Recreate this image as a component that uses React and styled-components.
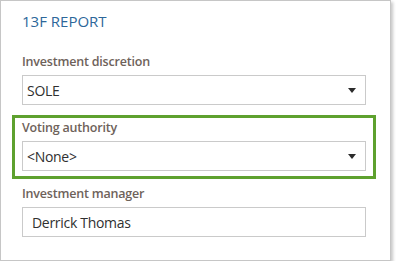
import React from 'react';
import styled, { createGlobalStyle } from 'styled-components';

const GlobalStyle = createGlobalStyle`
  body {
    margin: 0;
    background: #ffffff;
    font-family: 'Open Sans', 'Liberation Sans', sans-serif;
  }
`;

const Panel = styled.div`
  box-sizing: border-box;
  width: 391px;
  height: 261px;
  border: 1px solid #c6c6c6;
  background: #ffffff;
  box-shadow: 2px 2px 3px rgba(0, 0, 0, 0.22);
  padding: 10px 14px 15px 11px;
`;

const Title = styled.div`
  margin: 0 0 18px 10px;
  font-size: 15px;
  line-height: 20px;
  color: #2d679a;
`;

const FieldList = styled.div`
  display: flex;
  flex-direction: column;
  gap: 2px;
`;

const Field = styled.div`
  border: 3px solid ${(props) => (props.highlight ? '#5ea12e' : 'transparent')};
  padding: 1px 7px 5px;
`;

const Label = styled.div`
  font-size: 12.5px;
  font-weight: 600;
  letter-spacing: -0.2px;
  line-height: 18px;
  color: #6e625a;
  margin-bottom: 4px;
`;

const Box = styled.div`
  box-sizing: border-box;
  height: 30px;
  border: 1px solid #cacaca;
  display: flex;
  align-items: center;
  justify-content: space-between;
  padding: 0 9px 0 ${(props) => (props.select ? '4px' : '9px')};
  font-size: 14px;
  letter-spacing: -0.3px;
  color: #303030;
`;

const Arrow = styled.span`
  width: 0;
  height: 0;
  border-left: 4px solid transparent;
  border-right: 4px solid transparent;
  border-top: 5px solid #2b2b2b;
  margin-top: 1px;
`;

const fields = [
  { label: 'Investment discretion', value: 'SOLE', select: true },
  { label: 'Voting authority', value: '<None>', select: true, highlight: true },
  { label: 'Investment manager', value: 'Derrick Thomas' },
];

const App = () => (
  <>
    <GlobalStyle />
    <Panel>
      <Title>13F REPORT</Title>
      <FieldList>
        {fields.map((field) => (
          <Field key={field.label} highlight={field.highlight}>
            <Label>{field.label}</Label>
            <Box select={field.select}>
              <span>{field.value}</span>
              {field.select && <Arrow />}
            </Box>
          </Field>
        ))}
      </FieldList>
    </Panel>
  </>
);

export default App;
